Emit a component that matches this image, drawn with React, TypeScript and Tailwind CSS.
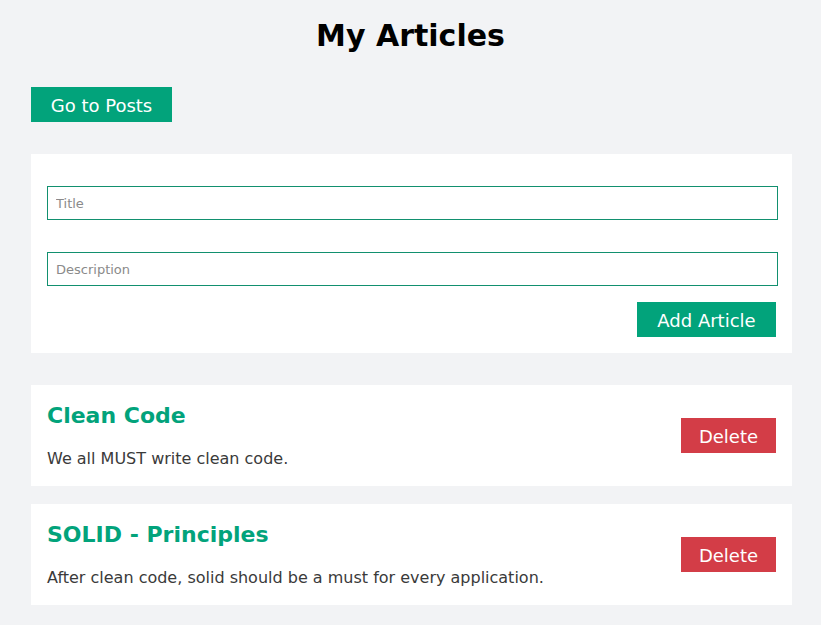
import { useState } from 'react';

interface Article {
  id: number;
  title: string;
  description: string;
}

const initialArticles: Article[] = [
  { id: 1, title: 'Clean Code', description: 'We all MUST write clean code.' },
  {
    id: 2,
    title: 'SOLID - Principles',
    description: 'After clean code, solid should be a must for every application.'
  }
];

export default function App() {
  const [articles, setArticles] = useState<Article[]>(initialArticles);
  const [title, setTitle] = useState('');
  const [description, setDescription] = useState('');

  // Add a new article from the form
  const handleAdd = () => {
    if (!title.trim()) return;
    setArticles([...articles, { id: Date.now(), title, description }]);
    setTitle('');
    setDescription('');
  };

  const handleDelete = (id: number) => {
    setArticles(articles.filter((a) => a.id !== id));
  };

  return (
    <div className="min-h-[625px] bg-[#f2f3f5] pb-5 font-['DejaVu_Sans',sans-serif] text-[#333]">
      <h1 className="pt-[16px] text-center text-[30px] font-bold leading-[40px] text-black">
        My Articles
      </h1>

      <div className="mx-[31px] mt-[31px] w-[761px]">
        {/* Navigation */}
        <button
          type="button"
          className="h-[35px] w-[141px] bg-[#02a37b] pt-px text-[18px] text-white"
        >
          Go to Posts
        </button>

        {/* New article form */}
        <div className="mt-[32px] bg-white px-4 pb-4 pt-[32px]">
          <input
            value={title}
            onChange={(e) => setTitle(e.target.value)}
            placeholder="Title"
            className="block h-[34px] w-[731px] border border-[#12906f] px-2 text-[13px] text-[#333] outline-none placeholder:text-[#8a8a8a]"
          />
          <input
            value={description}
            onChange={(e) => setDescription(e.target.value)}
            placeholder="Description"
            className="mt-[32px] block h-[34px] w-[731px] border border-[#12906f] px-2 text-[13px] text-[#333] outline-none placeholder:text-[#8a8a8a]"
          />
          <div className="mt-4 flex justify-end">
            <button
              type="button"
              onClick={handleAdd}
              className="h-[35px] w-[139px] bg-[#02a37b] pt-px text-[18px] text-white"
            >
              Add Article
            </button>
          </div>
        </div>

        {/* Article list */}
        <div className="mt-[32px] flex flex-col gap-[18px]">
          {articles.map((article) => (
            <div
              key={article.id}
              className="flex items-center justify-between bg-white px-4 pb-[15px] pt-4"
            >
              <div>
                <h2 className="text-[22px] font-bold leading-[30px] text-[#02a37b]">
                  {article.title}
                </h2>
                <p className="mt-4 text-[16px] leading-6 text-[#3a3a3a]">
                  {article.description}
                </p>
              </div>
              <button
                type="button"
                onClick={() => handleDelete(article.id)}
                className="mt-[-1px] h-[35px] w-[95px] bg-[#d33d47] pt-px text-[18px] text-white"
              >
                Delete
              </button>
            </div>
          ))}
        </div>
      </div>
    </div>
  );
}
